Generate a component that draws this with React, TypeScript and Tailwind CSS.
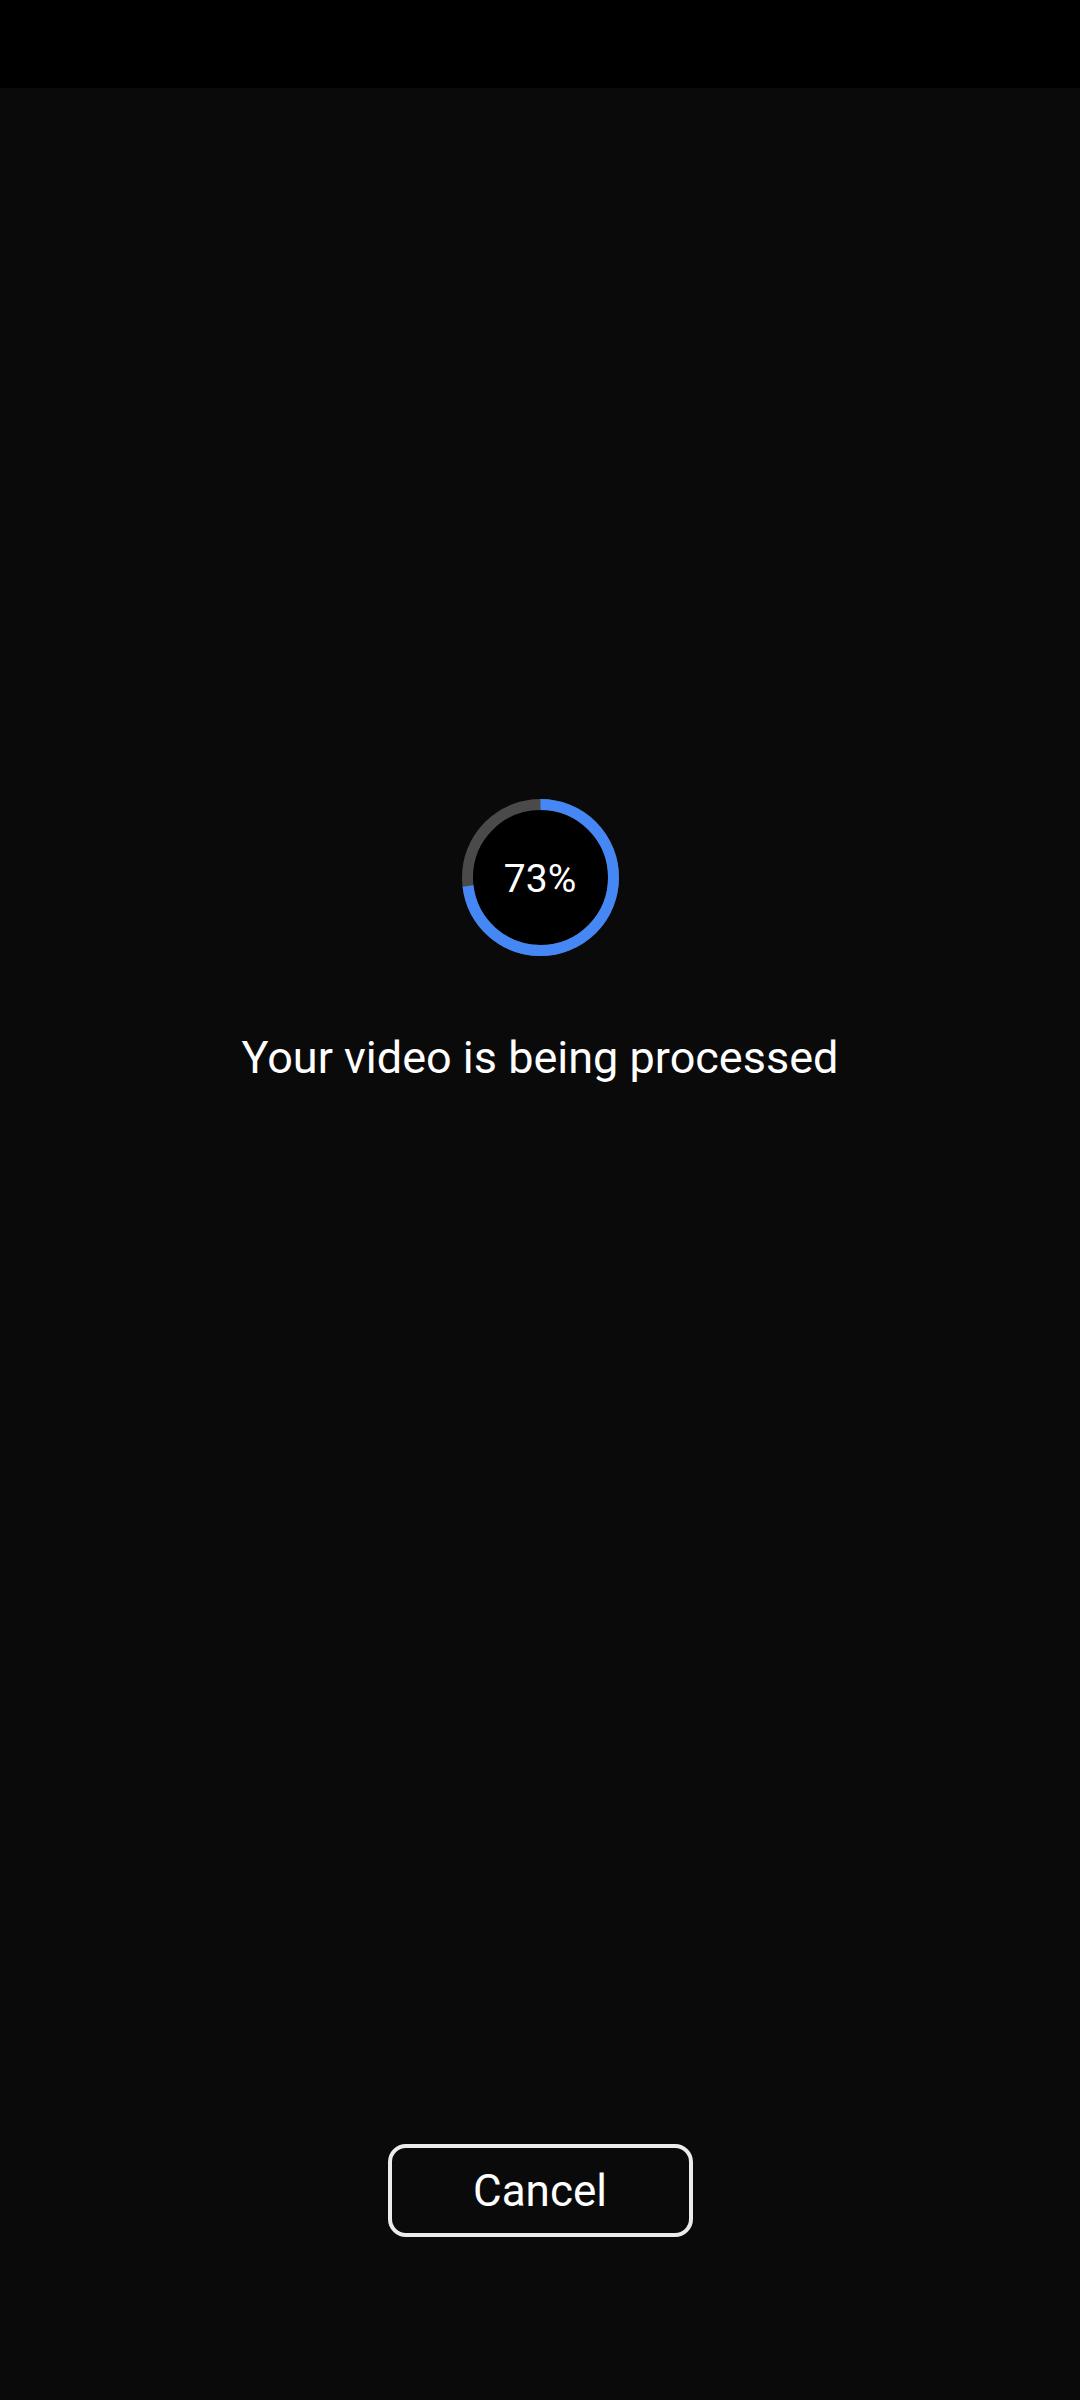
import React from 'react';

const progress = 73;

const ProgressRing = ({ value }: { value: number }) => {
  const size = 157;
  const stroke = 11;
  const r = (size - stroke) / 2;
  const c = 2 * Math.PI * r;
  return (
    <div className="relative w-[157px] h-[157px]">
      <svg width={size} height={size} viewBox={`0 0 ${size} ${size}`} className="-rotate-90">
        <circle cx={size / 2} cy={size / 2} r={r} fill="#000000" stroke="#4a4a4a" strokeWidth={stroke} />
        <circle
          cx={size / 2}
          cy={size / 2}
          r={r}
          fill="none"
          stroke="#4587f5"
          strokeWidth={stroke}
          strokeDasharray={`${(c * value) / 100} ${c}`}
        />
      </svg>
      <div className="absolute inset-0 flex items-center justify-center text-[39px] text-white leading-none pt-[3px]">
        {value}%
      </div>
    </div>
  );
};

const App = () => {
  return (
    <div className="w-[1080px] h-[2400px] flex flex-col bg-[#0a0a0a] font-['Roboto',sans-serif]">
      <div className="h-[88px] bg-black" />
      <div className="flex-1 flex flex-col items-center">
        <div className="mt-[711px]">
          <ProgressRing value={progress} />
        </div>
        <p className="mt-[75px] text-[45px] leading-[54px] text-white">Your video is being processed</p>
        <div className="flex-1" />
        <button className="mb-[163px] w-[305px] h-[93px] rounded-[18px] border-4 border-[#ececec] flex items-center justify-center text-[44px] text-white">
          Cancel
        </button>
      </div>
    </div>
  );
};

export default App;
